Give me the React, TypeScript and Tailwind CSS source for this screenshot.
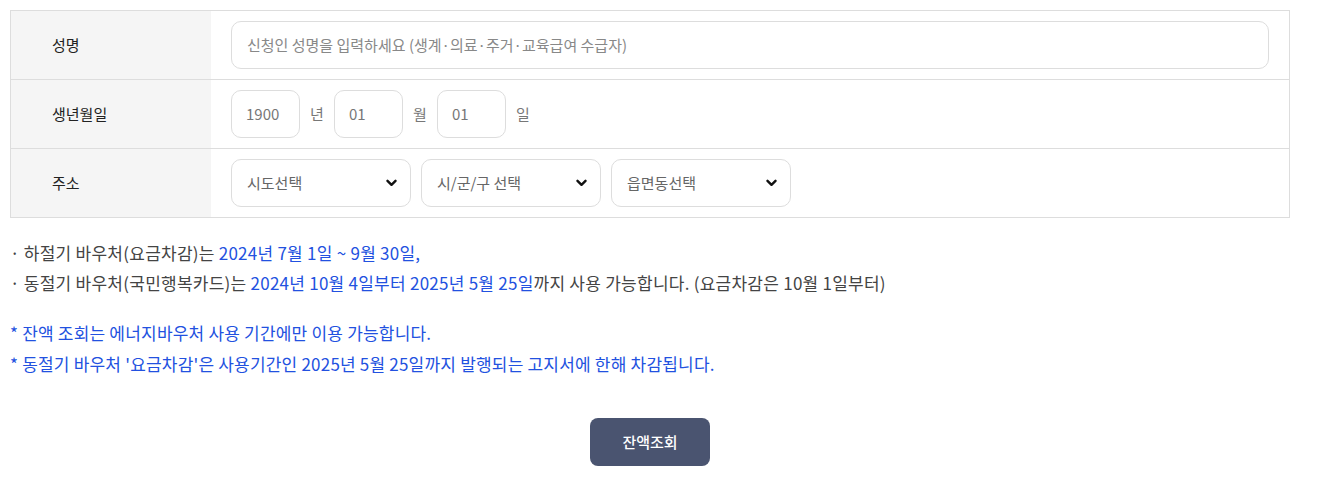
import React from "react";

const font = { fontFamily: '"Noto Sans CJK KR", "Noto Sans", sans-serif' };

const Chevron = () => (
  <svg viewBox="0 0 11 8" className="w-[11px] h-[8px] text-[#111]" fill="none" stroke="currentColor" strokeWidth={2.4} strokeLinecap="round" strokeLinejoin="round">
    <path d="M1.5 1.8l4 4 4-4" />
  </svg>
);

const Row = ({ label, children, last }: { label: string; children: React.ReactNode; last?: boolean }) => (
  <div className={`flex ${last ? "h-[68px]" : "h-[69px] border-b border-[#dddddd]"}`}>
    <div className="w-[200px] shrink-0 bg-[#f5f5f5] flex items-center pl-[41px] text-[15px] text-[#222]">{label}</div>
    <div className="flex-1 flex items-center pl-[20px] pr-[20px]">{children}</div>
  </div>
);

const Select = ({ text }: { text: string }) => (
  <div className="w-[180px] h-[48px] border border-[#dddddd] rounded-[10px] flex items-center justify-between pl-[15px] pr-[13px] text-[15px] text-[#666]">
    <span>{text}</span>
    <Chevron />
  </div>
);

const DateBox = ({ value, unit }: { value: string; unit: string }) => (
  <div className="flex items-center">
    <div className="w-[69px] h-[48px] border border-[#dddddd] rounded-[10px] flex items-center pl-[14px] text-[15px] text-[#777]">{value}</div>
    <span className="w-[34px] pl-[10px] text-[15px] text-[#777]">{unit}</span>
  </div>
);

export default function App() {
  return (
    <div className="bg-white p-[10px] pr-[53px]" style={font}>
      <div className="border border-[#dddddd] w-[1280px]">
        <Row label="성명">
          <div className="w-full h-[48px] border border-[#dddddd] rounded-[10px] flex items-center pl-[15px] text-[15px] text-[#888]">
            신청인 성명을 입력하세요 (생계·의료·주거·교육급여 수급자)
          </div>
        </Row>
        <Row label="생년월일">
          <div className="flex items-center">
            <DateBox value="1900" unit="년" />
            <DateBox value="01" unit="월" />
            <DateBox value="01" unit="일" />
          </div>
        </Row>
        <Row label="주소" last>
          <div className="flex gap-[10px]">
            <Select text="시도선택" />
            <Select text="시/군/구 선택" />
            <Select text="읍면동선택" />
          </div>
        </Row>
      </div>

      <div className="mt-[20px] text-[17px] tracking-[0.25px] leading-[30px] text-[#444]">
        <p>
          · 하절기 바우처(요금차감)는 <span className="text-[#2251e0]">2024년 7월 1일 ~ 9월 30일,</span>
        </p>
        <p>
          · 동절기 바우처(국민행복카드)는 <span className="text-[#2251e0]">2024년 10월 4일부터 2025년 5월 25일</span>까지 사용 가능합니다. (요금차감은 10월 1일부터)
        </p>
      </div>

      <div className="mt-[19px] text-[17px] tracking-[0.2px] leading-[31px] text-[#2251e0]">
        <p>* 잔액 조회는 에너지바우처 사용 기간에만 이용 가능합니다.</p>
        <p>* 동절기 바우처 '요금차감'은 사용기간인 2025년 5월 25일까지 발행되는 고지서에 한해 차감됩니다.</p>
      </div>

      <div className="flex justify-center w-[1280px] mt-[39px]">
        <button className="w-[120px] h-[48px] rounded-[8px] bg-[#4a5470] text-white text-[15px] font-medium">잔액조회</button>
      </div>
    </div>
  );
}
